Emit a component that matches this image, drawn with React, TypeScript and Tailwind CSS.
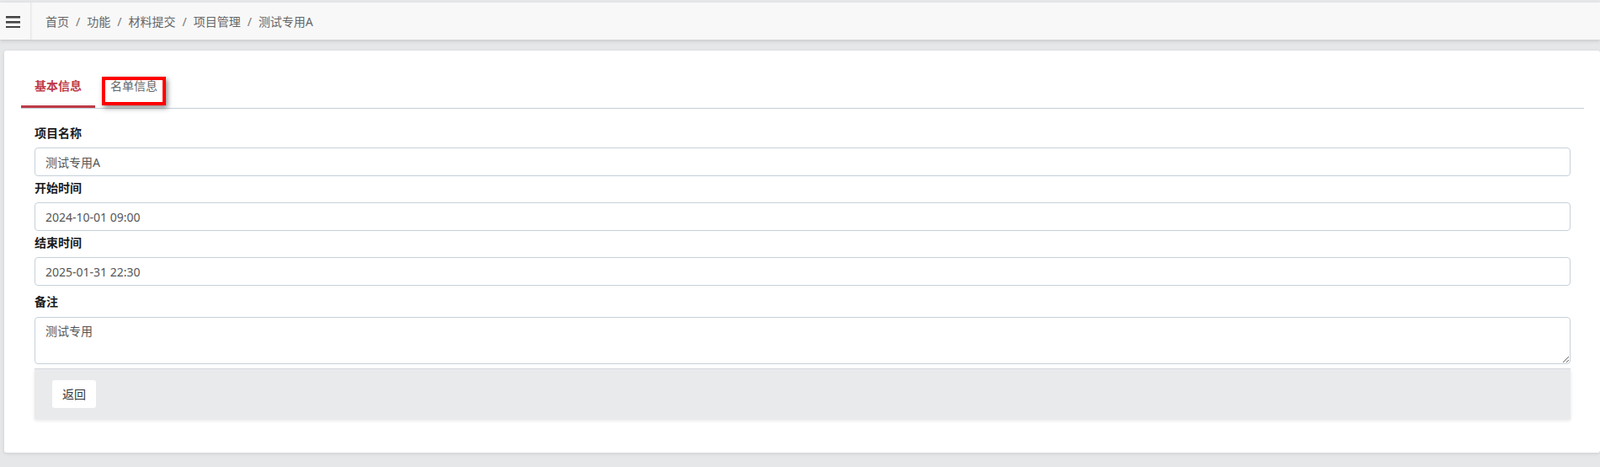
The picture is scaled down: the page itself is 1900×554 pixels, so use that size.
import React from "react";

const font = { fontFamily: '"Noto Sans", "Noto Sans CJK SC", sans-serif' };

function Field({ label, value, first }: { label: string; value: string; first?: boolean }) {
  return (
    <div className={first ? "" : "mt-[4px]"}>
      <label className="block text-[14px] leading-[20px] font-bold text-[#1a1a1a] mb-[7px]">{label}</label>
      <input
        readOnly
        value={value}
        className="block w-full h-[34px] px-3 text-[14px] text-[#555] border border-[#c5d1da] rounded-[4px] bg-white outline-none"
      />
    </div>
  );
}

export default function App() {
  const crumbs = ["首页", "功能", "材料提交", "项目管理", "测试专用A"];
  return (
    <div className="min-h-[554px] bg-[#e6e7e9] pt-[3px]" style={font}>
      <header className="h-[44px] bg-[#f8f8f8] flex items-stretch shadow-[0_2px_4px_rgba(0,0,0,0.12)]">
        <div className="w-[37px] flex items-center justify-center border-r border-[#e6e6e6] shadow-[1px_0_2px_rgba(0,0,0,0.04)]">
          <svg width="18" height="16" viewBox="0 0 18 16" className="text-[#444] -ml-[4px]">
            <rect x="0" y="2" width="17" height="2.6" fill="currentColor" />
            <rect x="0" y="8" width="17" height="2.6" fill="currentColor" />
            <rect x="0" y="14" width="17" height="2.6" fill="currentColor" />
          </svg>
        </div>
        <nav className="flex items-center pl-[17px] text-[14px] text-[#666]">
          {crumbs.map((c, i) => (
            <span key={c} className="flex items-center">
              {i > 0 && <span className="px-2 text-[#777]">/</span>}
              <span>{c}</span>
            </span>
          ))}
        </nav>
      </header>

      <main className="ml-[5px] mt-[13px] bg-white rounded-[3px] shadow-[0_1px_4px_rgba(0,0,0,0.12)] pl-5 pr-[19px] pt-[31px] pb-[40px]">
        <div className="flex items-start border-b border-[#c3ced7] h-[38px]">
          <div className="h-[37px] px-4 pt-[1px] text-[14px] leading-[20px] font-bold text-[#bf3b47] border-b-[3px] border-[#bf3b47]">
            基本信息
          </div>
          <div className="ml-[8px] h-[34px] px-[6px] border-4 border-[#ff0000] text-[14px] leading-[14px] text-[#666] shadow-[2px_3px_6px_rgba(0,0,0,0.45)]">
            名单信息
          </div>
        </div>

        <form className="px-4 pt-[19px]">
          <Field first label="项目名称" value="测试专用A" />
          <Field label="开始时间" value="2024-10-01 09:00" />
          <Field label="结束时间" value="2025-01-31 22:30" />
          <div className="mt-[9px]">
            <label className="block text-[14px] leading-[20px] font-bold text-[#1a1a1a] mb-[8px]">备注</label>
            <textarea
              readOnly
              value="测试专用"
              className="block w-full h-[56px] px-3 py-[6px] text-[14px] leading-[20px] text-[#555] border border-[#c5d1da] rounded-[4px] bg-white outline-none"
            />
          </div>
          <div className="mt-[5px] h-[60px] bg-[#e9eaec] border-t border-[#d5d9dd] shadow-[0_2px_4px_rgba(0,0,0,0.1)] pl-[21px] pt-[13px]">
            <button type="button" className="h-[33px] w-[52px] bg-white rounded-[3px] text-[14px] text-[#333]">
              返回
            </button>
          </div>
        </form>
      </main>
    </div>
  );
}
